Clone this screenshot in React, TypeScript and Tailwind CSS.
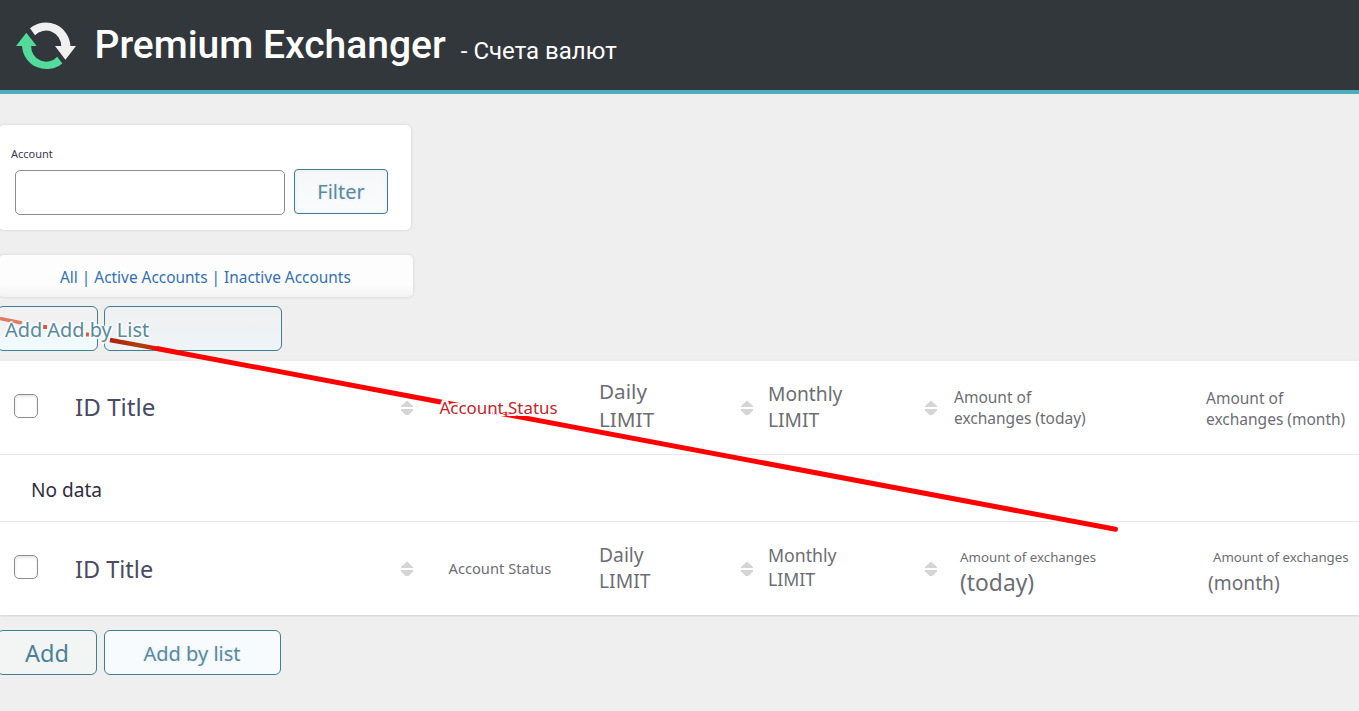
import React from "react";

const halo =
  "[text-shadow:2px_0_0_#fff,-2px_0_0_#fff,0_2px_0_#fff,0_-2px_0_#fff,2px_2px_0_#fff,-2px_-2px_0_#fff,2px_-2px_0_#fff,-2px_2px_0_#fff,0_0_3px_#fff]";
const softHalo =
  "[text-shadow:2px_0_1px_#fafcfd,-2px_0_1px_#fafcfd,0_2px_1px_#fafcfd,0_-2px_1px_#fafcfd,0_0_3px_#fafcfd]";
const faintHalo = "[text-shadow:0_0_3px_#eef0f2,0_0_3px_#eef0f2,0_0_2px_#eef0f2]";

function Logo() {
  return (
    <svg width="60" height="50" viewBox="0 0 60 50" className="shrink-0">
      <path d="M14 6.3 A24.6 24.6 0 0 1 54.4 24 L60 24 L49.4 37.8 L39 24 L45.2 24 A15.2 15.2 0 0 0 19 13.3 Z" fill="#f1f0f1" />
      <path d="M10.3 10.8 L20.7 24 L15.2 24 A15 15 0 0 0 41.3 34.7 L46.3 41.4 A24.6 24.6 0 0 1 6 24 L0 24 Z" fill="#52db9b" />
    </svg>
  );
}

function Sort({ className }: { className: string }) {
  return (
    <div className={className}>
      <svg width="14" height="16" viewBox="0 0 14 16" fill="#d5d5d5">
        <path d="M7 .5 L13 6 V7 H1 V6 Z" />
        <path d="M1 9 H13 V10.5 L8.5 15 H5.5 L1 10.5 Z" />
      </svg>
    </div>
  );
}

function Check({ className }: { className: string }) {
  return (
    <div className={className}>
      <div className="h-6 w-6 rounded-[5px] border border-[#8c8c91] bg-white shadow-[inset_0_2px_3px_rgba(0,0,0,0.1)]" />
    </div>
  );
}

const row =
  "grid grid-cols-[75px_325px_40px_159px_141px_28px_156px_30px_252px_1fr] items-start whitespace-nowrap text-[#6d6e74]";

export default function App() {
  return (
    <div className="relative h-[711px] w-[1359px] overflow-hidden bg-[#efefef] font-['Noto_Sans',sans-serif]">
      <header className="flex h-[94px] border-b-4 border-[#4dacbd] bg-[#32373c] pl-4 font-['Roboto',sans-serif] text-white">
        <div className="pt-[22px]">
          <Logo />
        </div>
        <h1 className="ml-[18.5px] pt-[22px] text-[39px] font-medium leading-[46px]">Premium Exchanger</h1>
        <p className="ml-[15px] pt-[36px] text-[24px] leading-[30px]">- Счета валют</p>
      </header>

      <main>
        <section className="-ml-px mt-[31px] h-[105px] w-[412px] rounded-[5px] bg-white pt-5 shadow-[0_0_3px_rgba(0,0,0,0.14)]">
          <label className="ml-3 block text-[11px] leading-[18px] text-[#3b3950]">Account</label>
          <div className="ml-4 mt-[6px] flex gap-[9px]">
            <input className="mt-px h-[45px] w-[270px] rounded-[5px] border border-[#8b8b90] bg-white" />
            <button className={`flex h-[45px] w-[94px] items-center justify-center rounded-[4px] border border-[#3c7d90] bg-linear-to-b from-[#f5f7f9] to-[#fafcfc] text-[20px] text-[#568ba1] shadow-[inset_0_0_4px_#e6eaed] ${faintHalo}`}>
              Filter
            </button>
          </div>
        </section>

        <nav className="-ml-px mt-[25px] flex h-[42px] w-[414px] items-center whitespace-pre rounded-[5px] bg-linear-to-b from-[#fdfdfd] from-70% to-[#f3f3f3] pl-[61px] pt-[3px] text-[15.42px] text-[#3470b0] shadow-[0_0_3px_rgba(0,0,0,0.14)]">
          All | Active Accounts | Inactive Accounts
        </nav>

        <div className="relative mt-[9px] flex h-[45px] gap-[6px]">
          <div className="-ml-[3px] w-[101px] rounded-[6px] border border-[#3c8093] bg-linear-to-b from-[#f1f1f2] from-40% to-[#effdff]" />
          <div className="w-[178px] rounded-[6px] border border-[#3c8093] bg-linear-to-b from-[#f0f0f1] to-[#eef4f8]" />
          <span className={`absolute left-[5px] top-[9px] z-20 whitespace-nowrap text-[19.9px] leading-[30px] text-[#5a8a9d] ${softHalo}`}>
            Add Add by List
          </span>
        </div>

        <section className="mt-[9px] h-[255px] border-t border-[#ececec] bg-white shadow-[0_1px_2px_rgba(0,0,0,0.12)]">
          <div className={`${row} h-[94px] border-b border-[#e9e9e9]`}>
            <Check className="pl-[14px] pt-[33px]" />
            <span className="pt-[30px] text-[24.2px] leading-8 text-[#4a4a62]">ID Title</span>
            <Sort className="pt-[39px]" />
            <span className={`relative z-20 -ml-[0.5px] pt-[35px] text-[16.9px] leading-6 text-[#c1272d] ${halo}`}>Account Status</span>
            <span className={`relative z-20 pt-4 text-[20.7px] leading-7 ${halo}`}>
              Daily
              <br />
              LIMIT
            </span>
            <Sort className="pt-[39px]" />
            <span className="pt-5 text-[19.2px] leading-[26px]">
              Monthly
              <br />
              LIMIT
            </span>
            <Sort className="pt-[39px]" />
            <span className="pt-[26px] text-[15.5px] leading-[21px]">
              Amount of
              <br />
              exchanges (today)
            </span>
            <span className="pt-[27px] text-[15.5px] leading-[21px]">
              Amount of
              <br />
              exchanges (month)
            </span>
          </div>

          <div className="h-[67px] border-b border-[#e9e9e9] pl-[31px] pt-[20px] text-[19.1px] leading-[30px] text-[#2f2d40]">
            No data
          </div>

          <div className={row}>
            <Check className="pl-[14px] pt-[33px]" />
            <span className="pt-[31px] text-[23.5px] leading-8 text-[#4a4a62]">ID Title</span>
            <Sort className="pt-[39px]" />
            <span className="pl-[8.5px] pt-[34px] text-[14.7px] leading-6">Account Status</span>
            <span className="pt-5 text-[19.3px] leading-[26px]">
              Daily
              <br />
              LIMIT
            </span>
            <Sort className="pt-[39px]" />
            <span className="pt-[21px] text-[17.7px] leading-6">
              Monthly
              <br />
              LIMIT
            </span>
            <Sort className="pt-[39px]" />
            <div className="pl-[6px] pt-[25px]">
              <div className="text-[13.3px] leading-5">Amount of exchanges</div>
              <div className="pt-px text-[22.8px] leading-[30px]">(today)</div>
            </div>
            <div className="pt-[25px]">
              <div className="pl-[7px] text-[13.25px] leading-5">Amount of exchanges</div>
              <div className="pl-[2px] pt-[2px] text-[19.2px] leading-7">(month)</div>
            </div>
          </div>
        </section>

        <div className="mt-[15px] flex h-[45px] gap-[7px]">
          <button className="-ml-[3px] w-[100px] rounded-[6px] border border-[#3c8093] bg-[#f3f5f4] pt-[3px] text-[23.5px] leading-none text-[#4b8198]">
            Add
          </button>
          <button className={`w-[177px] rounded-[6px] border border-[#3c8093] bg-[#f7fbfd] pt-[2px] pr-px text-[20px] text-[#568ba0] ${faintHalo}`}>
            Add by list
          </button>
        </div>
      </main>

      <svg className="pointer-events-none absolute left-0 top-0 z-10" width="1359" height="711">
        <defs>
          <linearGradient id="stroke-fade" gradientUnits="userSpaceOnUse" x1="110" y1="340" x2="160" y2="349">
            <stop offset="0" stopColor="#b51f0c" />
            <stop offset="0.65" stopColor="#a8430c" />
            <stop offset="1" stopColor="#ff0000" />
          </linearGradient>
        </defs>
        <path d="M0 318.5 L22 323" stroke="#dc7c60" strokeWidth="3.5" />
        <path d="M43 327 h4 M86 334.5 h3" stroke="#e3553f" strokeWidth="4" />
        <path d="M110 340 L160 349.1" stroke="url(#stroke-fade)" strokeWidth="4.5" />
        <path d="M158 348.7 L1115.5 529.3" stroke="#ff0000" strokeWidth="5" strokeLinecap="round" />
      </svg>
    </div>
  );
}
